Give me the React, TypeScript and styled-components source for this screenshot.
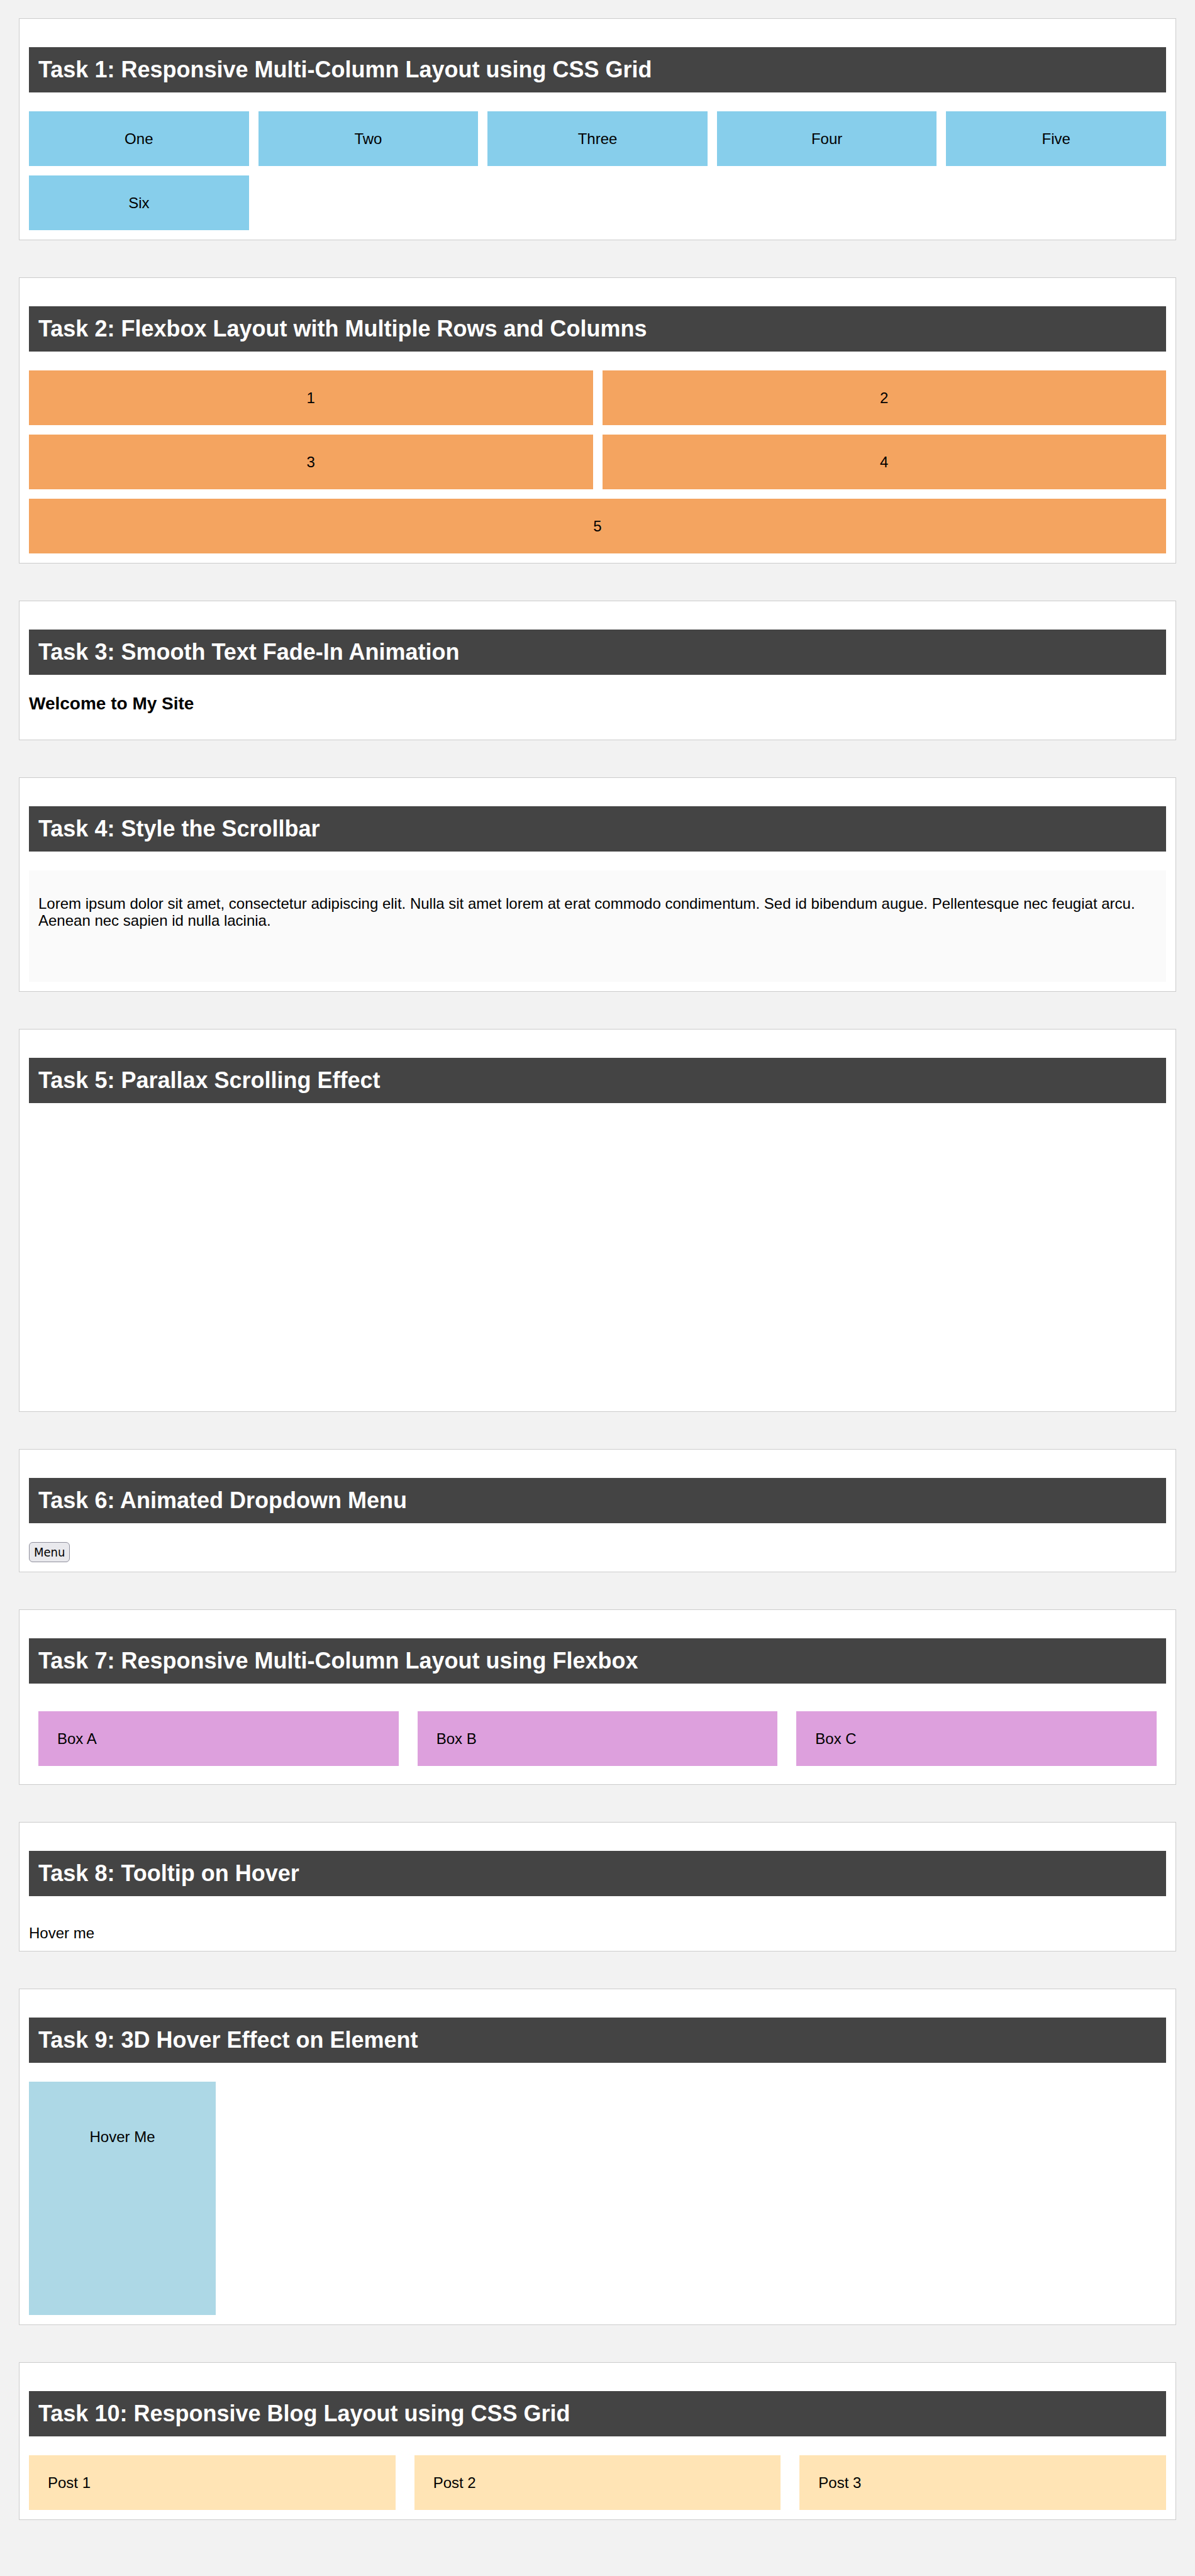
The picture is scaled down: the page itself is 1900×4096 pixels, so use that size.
import React from 'react';
import styled, { createGlobalStyle } from 'styled-components';

const GlobalStyle = createGlobalStyle`
  *, *::before, *::after { box-sizing: border-box; }
  body {
    margin: 0;
    background: #f2f2f2;
    color: #000;
    font-family: Arial, "Liberation Sans", sans-serif;
    font-size: 24px;
    line-height: 27px;
  }
`;

const Page = styled.main`
  display: flex;
  flex-direction: column;
  gap: 59px;
  padding: 29px 30px 89px;
`;

const Section = styled.section`
  padding: 45px 15px 15px;
  background: #fff;
  border: 1px solid #ccc;
`;

const Heading = styled.h2`
  margin: 0 0 30px;
  padding: 15px;
  background: #444;
  color: #fff;
  font-size: 36px;
  line-height: 42px;
`;

const AutoGrid = styled.div`
  display: grid;
  grid-template-columns: repeat(auto-fit, minmax(300px, 1fr));
  gap: 15px;
`;

const GridItem = styled.div`
  padding: 30px;
  background: skyblue;
  text-align: center;
`;

const FlexRows = styled.div`
  display: flex;
  flex-wrap: wrap;
  gap: 15px;
`;

const FlexItem = styled.div`
  flex: 1 1 45%;
  padding: 30px;
  background: sandybrown;
  text-align: center;
`;

const Welcome = styled.h3`
  margin: 0 0 27px;
  font-size: 28px;
  line-height: 31px;
`;

const ScrollBox = styled.div`
  height: 177px;
  padding: 15px;
  overflow-y: auto;
  background: #fafafa;
`;

const Paragraph = styled.p`
  margin: 24px 0;
`;

const Parallax = styled.div`
  height: 445px;
`;

const MenuButton = styled.button`
  display: block;
  height: 32px;
  padding: 0 7px;
  border: 1px solid #8f8f9d;
  border-radius: 6px;
  background: #e9e9ed;
  color: #000;
  font-family: "DejaVu Sans Condensed", Tahoma, "DejaVu Sans", sans-serif;
  font-size: 20px;
  line-height: 24px;
`;

const BoxRow = styled.div`
  display: flex;
  gap: 30px;
  padding: 14px 15px;
`;

const Box = styled.div`
  flex: 1;
  padding: 30px;
  background: plum;
`;

const Tooltip = styled.div`
  width: fit-content;
  margin-top: 45px;
`;

const HoverCard = styled.div`
  width: 297px;
  height: 371px;
  padding: 74px;
  background: lightblue;
  text-align: center;
`;

const BlogGrid = styled.div`
  display: grid;
  grid-template-columns: repeat(3, 1fr);
  gap: 30px;
`;

const Post = styled.article`
  padding: 30px;
  background: #ffe4b5;
`;

function Task({ title, children }: { title: string; children?: React.ReactNode }) {
  return (
    <Section>
      <Heading>{title}</Heading>
      {children}
    </Section>
  );
}

export default function App() {
  return (
    <>
      <GlobalStyle />
      <Page>
        <Task title="Task 1: Responsive Multi-Column Layout using CSS Grid">
          <AutoGrid>
            {['One', 'Two', 'Three', 'Four', 'Five', 'Six'].map((t) => (
              <GridItem key={t}>{t}</GridItem>
            ))}
          </AutoGrid>
        </Task>
        <Task title="Task 2: Flexbox Layout with Multiple Rows and Columns">
          <FlexRows>
            {[1, 2, 3, 4, 5].map((n) => (
              <FlexItem key={n}>{n}</FlexItem>
            ))}
          </FlexRows>
        </Task>
        <Task title="Task 3: Smooth Text Fade-In Animation">
          <Welcome>Welcome to My Site</Welcome>
        </Task>
        <Task title="Task 4: Style the Scrollbar">
          <ScrollBox>
            <Paragraph>
              Lorem ipsum dolor sit amet, consectetur adipiscing elit. Nulla sit amet lorem at erat
              commodo condimentum. Sed id bibendum augue. Pellentesque nec feugiat arcu. Aenean nec
              sapien id nulla lacinia.
            </Paragraph>
          </ScrollBox>
        </Task>
        <Task title="Task 5: Parallax Scrolling Effect">
          <Parallax />
        </Task>
        <Task title="Task 6: Animated Dropdown Menu">
          <MenuButton type="button">Menu</MenuButton>
        </Task>
        <Task title="Task 7: Responsive Multi-Column Layout using Flexbox">
          <BoxRow>
            <Box>Box A</Box>
            <Box>Box B</Box>
            <Box>Box C</Box>
          </BoxRow>
        </Task>
        <Task title="Task 8: Tooltip on Hover">
          <Tooltip>Hover me</Tooltip>
        </Task>
        <Task title="Task 9: 3D Hover Effect on Element">
          <HoverCard>Hover Me</HoverCard>
        </Task>
        <Task title="Task 10: Responsive Blog Layout using CSS Grid">
          <BlogGrid>
            <Post>Post 1</Post>
            <Post>Post 2</Post>
            <Post>Post 3</Post>
          </BlogGrid>
        </Task>
      </Page>
    </>
  );
}
